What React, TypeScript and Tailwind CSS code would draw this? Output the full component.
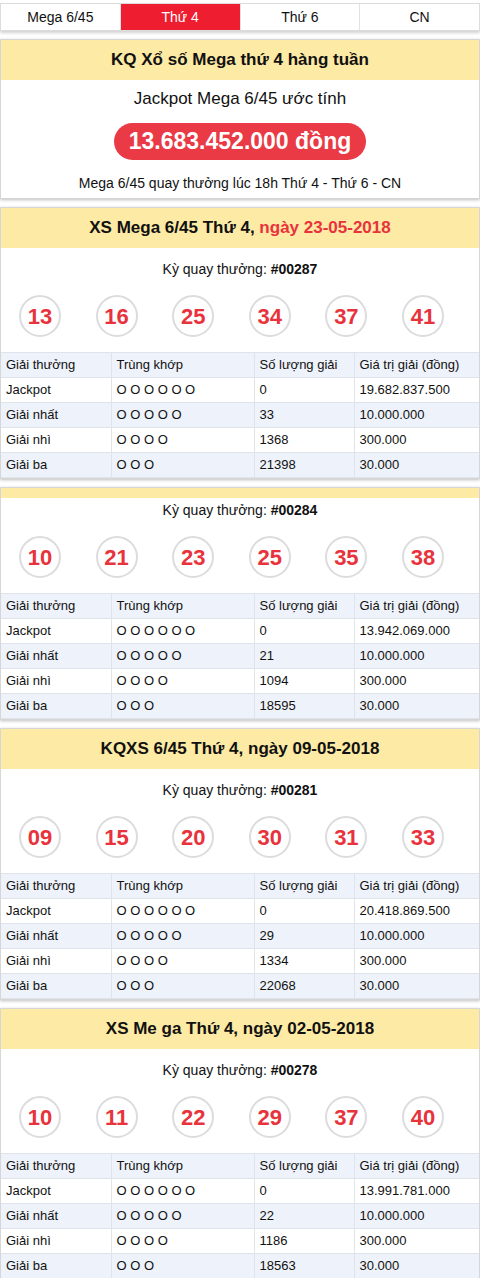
import React from "react";

type Row = { name: string; match: string; count: string; value: string };

type Draw = {
  title?: React.ReactNode;
  ky: string;
  balls: string[];
  counts: string[];
  jackpot: string;
};

const draws: Draw[] = [
  {
    title: (
      <span>
        XS Mega 6/45 Thứ 4, <span className="text-[#e8323c]">ngày 23-05-2018</span>
      </span>
    ),
    ky: "#00287",
    balls: ["13", "16", "25", "34", "37", "41"],
    counts: ["0", "33", "1368", "21398"],
    jackpot: "19.682.837.500",
  },
  {
    ky: "#00284",
    balls: ["10", "21", "23", "25", "35", "38"],
    counts: ["0", "21", "1094", "18595"],
    jackpot: "13.942.069.000",
  },
  {
    title: "KQXS 6/45 Thứ 4, ngày 09-05-2018",
    ky: "#00281",
    balls: ["09", "15", "20", "30", "31", "33"],
    counts: ["0", "29", "1334", "22068"],
    jackpot: "20.418.869.500",
  },
  {
    title: "XS Me ga Thứ 4, ngày 02-05-2018",
    ky: "#00278",
    balls: ["10", "11", "22", "29", "37", "40"],
    counts: ["0", "22", "1186", "18563"],
    jackpot: "13.991.781.000",
  },
];

function PrizeTable({ d }: { d: Draw }) {
  const rows: Row[] = [
    { name: "Jackpot", match: "O O O O O O", count: d.counts[0], value: d.jackpot },
    { name: "Giải nhất", match: "O O O O O", count: d.counts[1], value: "10.000.000" },
    { name: "Giải nhì", match: "O O O O", count: d.counts[2], value: "300.000" },
    { name: "Giải ba", match: "O O O", count: d.counts[3], value: "30.000" },
  ];
  const cell = "h-[25px] p-0 pl-[5px] text-left font-normal border-r border-b border-[#dfe3ea] last:border-r-0";
  return (
    <table className="w-full border-collapse table-fixed text-[13px] leading-[16px] text-[#111]">
      <colgroup>
        <col className="w-[110px]" />
        <col className="w-[143px]" />
        <col className="w-[100px]" />
        <col />
      </colgroup>
      <thead>
        <tr className="bg-[#eef2fa] border-t border-[#dfe3ea]">
          <th className={cell}>Giải thưởng</th>
          <th className={cell}>Trùng khớp</th>
          <th className={cell}>Số lượng giải</th>
          <th className={cell}>Giá trị giải (đồng)</th>
        </tr>
      </thead>
      <tbody>
        {rows.map((r, i) => (
          <tr key={r.name} className={i % 2 === 1 ? "bg-[#eef2fa]" : "bg-white"}>
            <td className={cell}>{r.name}</td>
            <td className={cell}>{r.match}</td>
            <td className={cell}>{r.count}</td>
            <td className={cell}>{r.value}</td>
          </tr>
        ))}
      </tbody>
    </table>
  );
}

function DrawCard({ d }: { d: Draw }) {
  return (
    <div className="mt-[8px] border border-[#d6d6d6] bg-white shadow-[0_1px_3px_rgba(0,0,0,0.25)]">
      {d.title ? (
        <div className="h-[40px] bg-[#fdeaa4] flex items-center justify-center text-[17px] font-bold text-[#111]">
          {d.title}
        </div>
      ) : (
        <div className="h-[10px] bg-[#fdeaa4]" />
      )}
      <div className={`${d.title ? "pt-[13px]" : "pt-[4px]"} text-center text-[14px] leading-[16px] text-[#111]`}>
        Kỳ quay thưởng: <span className="font-bold">{d.ky}</span>
      </div>
      <div className="flex pl-[18px] gap-[34.6px] mt-[18px] mb-[15px]">
        {d.balls.map((b, i) => (
          <div
            key={i}
            className="w-[42px] h-[42px] rounded-full border-2 border-[#dcdcdf] flex items-center justify-center text-[22px] font-bold text-[#e8323c]"
          >
            {b}
          </div>
        ))}
      </div>
      <PrizeTable d={d} />
    </div>
  );
}

export default function App() {
  const tabs = ["Mega 6/45", "Thứ 4", "Thứ 6", "CN"];
  return (
    <div className="w-[480px] bg-white font-['Liberation_Sans',Arial,sans-serif] text-[#111]">
      <div className="pt-[3px]">
        <div className="flex h-[28px] border border-[#dcdcdc] shadow-[0_2px_3px_rgba(0,0,0,0.18)]">
          {tabs.map((t, i) => (
            <div
              key={t}
              className={`flex-1 flex items-center justify-center text-[14px] border-r border-[#e2e2e2] last:border-r-0 ${
                i === 1 ? "bg-[#ee1d2f] text-white" : "bg-white text-[#111]"
              }`}
            >
              {t}
            </div>
          ))}
        </div>
      </div>

      <div className="mt-[8px] border border-[#d6d6d6] bg-white shadow-[0_1px_3px_rgba(0,0,0,0.25)]">
        <div className="h-[40px] bg-[#fdeaa4] flex items-center justify-center text-[17px] font-bold">
          KQ Xổ số Mega thứ 4 hàng tuần
        </div>
        <div className="flex flex-col items-center pt-[8px] pb-[6px]">
          <div className="text-[17px] leading-[22px]">Jackpot Mega 6/45 ước tính</div>
          <div className="mt-[13px] h-[37px] px-[15px] rounded-full bg-[#e93a45] flex items-center text-white text-[23px] font-bold">
            13.683.452.000 đồng
          </div>
          <div className="mt-[14px] text-[14px] leading-[18px]">
            Mega 6/45 quay thưởng lúc 18h Thứ 4 - Thứ 6 - CN
          </div>
        </div>
      </div>

      {draws.map((d) => (
        <DrawCard key={d.ky} d={d} />
      ))}
    </div>
  );
}
